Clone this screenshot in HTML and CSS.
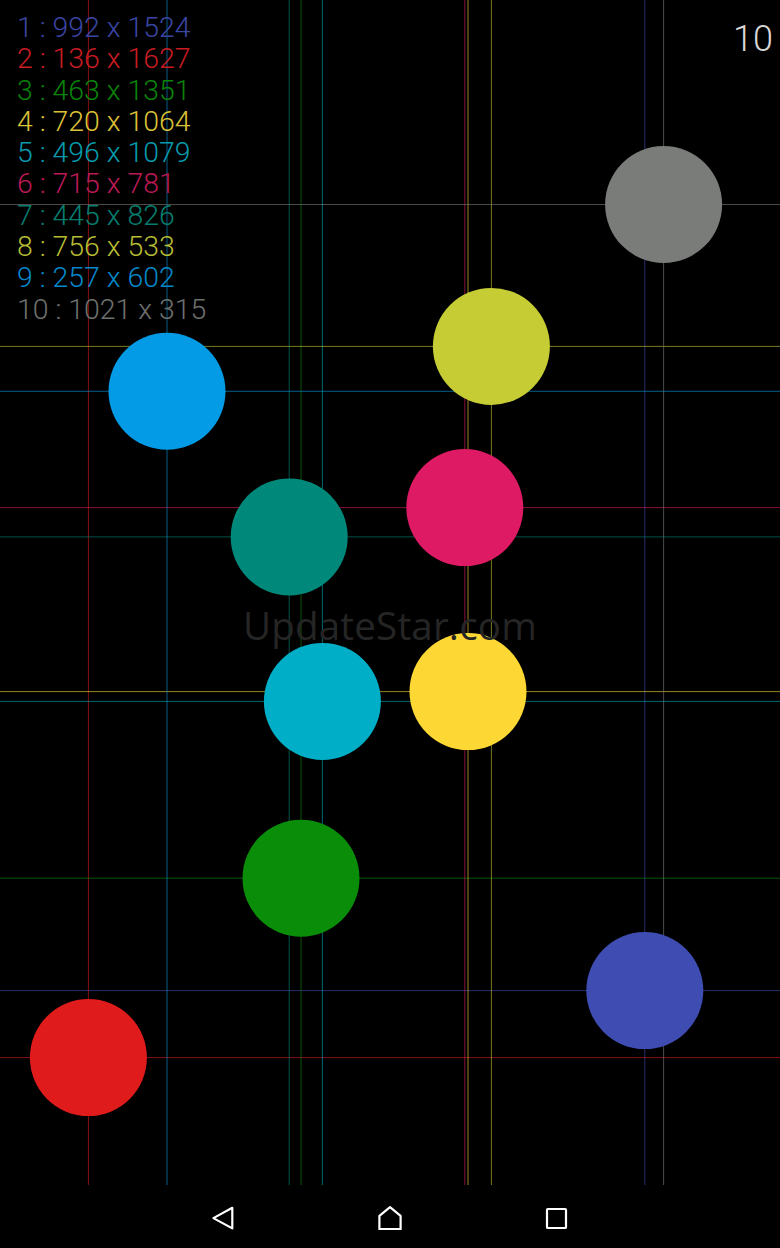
FILE: index.html
```html
<!DOCTYPE html>
<html>
<head>
<meta charset="utf-8">
<link rel="stylesheet" href="styles.css">
</head>
<body>
<div class="screen">
  <main class="app">
    <svg class="canvas" width="780" height="1185" viewBox="0 0 780 1185">
      <g class="lines" stroke-width="1">
        <g stroke="#3F51B5"><line x1="0" y1="990.6" x2="780" y2="990.6"/><line x1="644.8" y1="0" x2="644.8" y2="1185"/></g>
        <g stroke="#E01B1B"><line x1="0" y1="1057.6" x2="780" y2="1057.6"/><line x1="88.4" y1="0" x2="88.4" y2="1185"/></g>
        <g stroke="#0A8E0A"><line x1="0" y1="878.2" x2="780" y2="878.2"/><line x1="301" y1="0" x2="301" y2="1185"/></g>
        <g stroke="#FDD835"><line x1="0" y1="691.6" x2="780" y2="691.6"/><line x1="468" y1="0" x2="468" y2="1185"/></g>
        <g stroke="#00ACC1"><line x1="0" y1="701.4" x2="780" y2="701.4"/><line x1="322.4" y1="0" x2="322.4" y2="1185"/></g>
        <g stroke="#DD1A63"><line x1="0" y1="507.6" x2="780" y2="507.6"/><line x1="464.8" y1="0" x2="464.8" y2="1185"/></g>
        <g stroke="#00897B"><line x1="0" y1="536.9" x2="780" y2="536.9"/><line x1="289.2" y1="0" x2="289.2" y2="1185"/></g>
        <g stroke="#C6CC34"><line x1="0" y1="346.4" x2="780" y2="346.4"/><line x1="491.4" y1="0" x2="491.4" y2="1185"/></g>
        <g stroke="#039BE5"><line x1="0" y1="391.3" x2="780" y2="391.3"/><line x1="167" y1="0" x2="167" y2="1185"/></g>
        <g stroke="#7A7C7A"><line x1="0" y1="204.5" x2="780" y2="204.5"/><line x1="663.6" y1="0" x2="663.6" y2="1185"/></g>
      </g>
      <g class="dots">
        <circle cx="644.8" cy="990.6" r="58.5" fill="#3F4DB3"/>
        <circle cx="88.4" cy="1057.6" r="58.5" fill="#E01B1B"/>
        <circle cx="301" cy="878.2" r="58.5" fill="#0A8E0A"/>
        <circle cx="468" cy="691.6" r="58.5" fill="#FDD835"/>
        <circle cx="322.4" cy="701.4" r="58.5" fill="#00AFC7"/>
        <circle cx="464.8" cy="507.6" r="58.5" fill="#DD1A63"/>
        <circle cx="289.2" cy="536.9" r="58.5" fill="#00897B"/>
        <circle cx="491.4" cy="346.4" r="58.5" fill="#C6CC34"/>
        <circle cx="167" cy="391.3" r="58.5" fill="#039BE5"/>
        <circle cx="663.6" cy="204.5" r="58.5" fill="#7A7C7A"/>
      </g>
    </svg>
    <div class="watermark">UpdateStar.com</div>
    <div class="hud">
      <ul class="touches">
        <li class="c1">1 : 992 x 1524</li>
        <li class="c2">2 : 136 x 1627</li>
        <li class="c3">3 : 463 x 1351</li>
        <li class="c4">4 : 720 x 1064</li>
        <li class="c5">5 : 496 x 1079</li>
        <li class="c6">6 : 715 x 781</li>
        <li class="c7">7 : 445 x 826</li>
        <li class="c8">8 : 756 x 533</li>
        <li class="c9">9 : 257 x 602</li>
        <li class="c10">10 : 1021 x 315</li>
      </ul>
      <div class="count">10</div>
    </div>
  </main>
  <nav class="navbar">
    <svg class="navicon" width="24" height="24" viewBox="0 0 24 24"><polygon points="21.3,1.8 21.3,22.4 2.4,12.1"/></svg>
    <svg class="navicon" width="24" height="24" viewBox="0 0 24 24"><polygon points="12,1.2 22.6,9.8 22.6,23.2 1.4,23.2 1.4,9.8"/></svg>
    <svg class="navicon" width="24" height="24" viewBox="0 0 24 24"><rect x="2" y="3" width="19" height="19" rx="0.8"/></svg>
  </nav>
</div>
</body>
</html>
```

FILE: styles.css
```css
html, body {
  margin: 0;
  padding: 0;
  background: #000;
}

.screen {
  width: 780px;
  height: 1248px;
  display: flex;
  flex-direction: column;
  background: #000;
  overflow: hidden;
}

.app {
  position: relative;
  height: 1185px;
  flex: none;
}

.canvas {
  position: absolute;
  left: 0;
  top: 0;
  display: block;
}

.lines {
  stroke-opacity: 0.6;
}

.watermark {
  position: absolute;
  left: 0;
  right: 0;
  top: 599px;
  text-align: center;
  font-family: "Open Sans", "DejaVu Sans", sans-serif;
  font-size: 38.5px;
  line-height: 52px;
  color: #252525;
  letter-spacing: 0.2px;
}

.hud {
  position: relative;
  display: flex;
  justify-content: space-between;
  align-items: flex-start;
}

.touches {
  list-style: none;
  margin: 0;
  padding: 12px 0 0 17px;
  font-family: Roboto, "Noto Sans", sans-serif;
  font-weight: 300;
  font-size: 28.4px;
  line-height: 31.3px;
}

.c1 { color: #3A46A3; }
.c2 { color: #C81C22; }
.c3 { color: #0A840A; }
.c4 { color: #DCC236; }
.c5 { color: #079BAD; }
.c6 { color: #BA1A55; }
.c7 { color: #067E6F; }
.c8 { color: #B6BC33; }
.c9 { color: #0588CB; }
.c10 { color: #6E706E; }

.count {
  padding: 21px 7px 0 0;
  font-family: Roboto, "Noto Sans", sans-serif;
  font-weight: 300;
  font-size: 36px;
  line-height: 36px;
  color: #d8d8d8;
}

.navbar {
  height: 63px;
  display: flex;
  justify-content: center;
  align-items: center;
  gap: 143px;
  padding-top: 3px;
  box-sizing: border-box;
}

.navicon {
  display: block;
  fill: none;
  stroke: #fff;
  stroke-width: 2.2;
  stroke-linejoin: round;
}
```
